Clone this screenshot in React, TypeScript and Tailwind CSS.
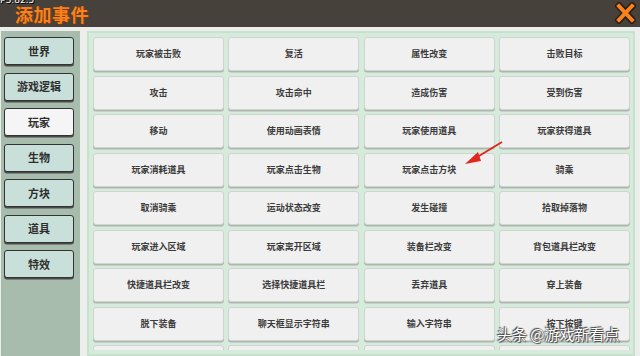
import React from "react";

const rows: string[][] = [
  ["玩家被击败", "复活", "属性改变", "击败目标"],
  ["攻击", "攻击命中", "造成伤害", "受到伤害"],
  ["移动", "使用动画表情", "玩家使用道具", "玩家获得道具"],
  ["玩家消耗道具", "玩家点击生物", "玩家点击方块", "骑乘"],
  ["取消骑乘", "运动状态改变", "发生碰撞", "拾取掉落物"],
  ["玩家进入区域", "玩家离开区域", "装备栏改变", "背包道具栏改变"],
  ["快捷道具栏改变", "选择快捷道具栏", "丢弃道具", "穿上装备"],
  ["脱下装备", "聊天框显示字符串", "输入字符串", "按下按键"],
  ["", "", "", ""],
];

const tabs = ["世界", "游戏逻辑", "玩家", "生物", "方块", "道具", "特效"];

export default function App() {
  const font = { fontFamily: '"Noto Sans CJK SC", "Noto Sans", sans-serif' };
  return (
    <div
      className="relative w-[640px] h-[356px] overflow-hidden bg-[#eceeec]"
      style={font}
    >
      {/* top bar */}
      <div className="h-[27px] bg-[#47413b] flex items-center pl-[15px] relative">
        <span
          className="text-[18px] font-bold text-[#f7821f] leading-none tracking-[0.5px]"
          style={{ textShadow: "0 1px 0 #7a3a08, 1px 0 0 #7a3a08" }}
        >
          添加事件
        </span>
        <span
          className="absolute left-0 top-[-4px] text-[9px] leading-none text-white"
          style={{ fontFamily: '"DejaVu Sans", sans-serif', textShadow: "0 0 1px #000, 1px 1px 0 #000" }}
        >
          PS:82.5
        </span>
        <svg className="absolute left-[615px] top-[2px]" width="21" height="22" viewBox="0 0 21 22">
          <path d="M4 4 L17 18 M17 4 L4 18" stroke="#2a1c12" strokeWidth="7" strokeLinecap="square" />
          <path d="M4 4 L17 18 M17 4 L4 18" stroke="#f7821f" strokeWidth="4" strokeLinecap="square" />
        </svg>
      </div>

      {/* body */}
      <div className="flex pt-[4px] h-[329px]">
        {/* left panel */}
        <div className="ml-[1px] w-[79px] bg-[#a8bcae] flex flex-col gap-[7.5px] pl-[3px] pt-[6px]">
          {tabs.map((t) => (
            <div
              key={t}
              className={`w-[70px] h-[28px] shrink-0 rounded-[3px] border-[1.5px] border-[#333] flex items-center justify-center text-[11px] font-bold text-[#2e2e2e] shadow-[0_1.5px_0_#4a4a4a] ${
                t === "玩家" ? "bg-[#f5f5f5]" : "bg-[#c9e0da]"
              }`}
            >
              {t}
            </div>
          ))}
        </div>

        {/* right panel */}
        <div className="ml-[7px] w-[548px] h-[325px] border-2 border-[#c6e2cf] bg-[#d7ebdd] pl-[4px] pr-[3px] pt-[4px]">
          <div className="h-[313px] overflow-hidden">
            <div className="grid grid-cols-4 gap-x-[4.5px] gap-y-[4.5px]">
              {rows.flat().map((label, i) => (
                <div
                  key={i}
                  className="h-[34px] rounded-[3px] bg-[#f0f0f0] border border-[#d0d4d0] shadow-[0_1.5px_0_#aeb6b0] flex items-center justify-center text-[9px] font-bold text-[#3c3c3c]"
                >
                  {label}
                </div>
              ))}
            </div>
          </div>
        </div>
      </div>

      {/* red arrow */}
      <svg className="absolute left-0 top-0 pointer-events-none" width="640" height="356">
        <line x1="502" y1="142" x2="474" y2="159" stroke="#e2281e" strokeWidth="2" />
        <polygon points="465,164 478,152 481,161" fill="#e2281e" />
      </svg>

      {/* watermark */}
      <div
        className="absolute left-[497px] top-[326px] text-[15px] leading-none text-white whitespace-nowrap"
        style={{ textShadow: "0 0 1px #333, 1px 1px 1px #444, -1px -1px 1px #444" }}
      >
        头条 @游戏新看点
      </div>
    </div>
  );
}
